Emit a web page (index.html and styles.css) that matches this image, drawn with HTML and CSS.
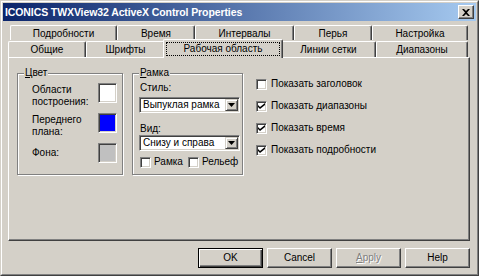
FILE: index.html
```html
<!DOCTYPE html>
<html lang="ru">
<head>
    <meta charset="UTF-8">
    <title>ICONICS TWXView32 ActiveX Control Properties</title>
    <link rel="stylesheet" href="styles.css">
</head>
<body>
    <div class="window">
        <div class="window-inner">
            <div class="titlebar">
                <span class="title">ICONICS TWXView32 ActiveX Control Properties</span>
                <span class="close-btn">
                    <svg width="8" height="7" viewBox="0 0 8 7"><path d="M0 0h2l2 2 2-2h2L5 3.5 8 7H6L4 5 2 7H0l3-3.5z" fill="#000"/></svg>
                </span>
            </div>

            <div class="tabs">
                <div class="tab-row back">
                    <div class="tab">Подробности</div>
                    <div class="tab">Время</div>
                    <div class="tab">Интервалы</div>
                    <div class="tab">Перья</div>
                    <div class="tab">Настройка</div>
                </div>
                <div class="tab-row front">
                    <div class="tab">Общие</div>
                    <div class="tab">Шрифты</div>
                    <div class="tab selected"><span class="focus">Рабочая область</span></div>
                    <div class="tab">Линии сетки</div>
                    <div class="tab">Диапазоны</div>
                </div>
            </div>

            <div class="panel">
                <div class="group color-group">
                    <span class="legend"><u>Ц</u>вет</span>
                    <div class="color-row">
                        <span class="color-label">Области<br>построения:</span>
                        <span class="swatch white"></span>
                    </div>
                    <div class="color-row">
                        <span class="color-label">Переднего<br>плана:</span>
                        <span class="swatch blue"></span>
                    </div>
                    <div class="color-row middle">
                        <span class="color-label">Фона:</span>
                        <span class="swatch gray"></span>
                    </div>
                </div>

                <div class="group frame-group">
                    <span class="legend"><u>Р</u>амка</span>
                    <div class="field-label">Стиль:</div>
                    <div class="combo">
                        <span class="combo-text">Выпуклая рамка</span>
                        <span class="combo-btn"><svg width="7" height="4" viewBox="0 0 7 4"><path d="M0 0h7L3.5 4z" fill="#000"/></svg></span>
                    </div>
                    <div class="field-label second">Вид:</div>
                    <div class="combo">
                        <span class="combo-text">Снизу и справа</span>
                        <span class="combo-btn"><svg width="7" height="4" viewBox="0 0 7 4"><path d="M0 0h7L3.5 4z" fill="#000"/></svg></span>
                    </div>
                    <div class="check-line">
                        <span class="check"><span class="box"></span>Рамка</span>
                        <span class="check"><span class="box"></span>Рельеф</span>
                    </div>
                </div>

                <div class="options">
                    <span class="check"><span class="box"></span>Показать заголовок</span>
                    <span class="check"><span class="box"><svg width="7" height="7" viewBox="0 0 7 7"><path d="M0 2l2 2 5-4v2L2 6 0 4z" fill="#000"/></svg></span>Показать диапазоны</span>
                    <span class="check"><span class="box"><svg width="7" height="7" viewBox="0 0 7 7"><path d="M0 2l2 2 5-4v2L2 6 0 4z" fill="#000"/></svg></span>Показать время</span>
                    <span class="check"><span class="box"><svg width="7" height="7" viewBox="0 0 7 7"><path d="M0 2l2 2 5-4v2L2 6 0 4z" fill="#000"/></svg></span>Показать подробности</span>
                </div>
            </div>

            <div class="buttons">
                <span class="btn default">OK</span>
                <span class="btn">Cancel</span>
                <span class="btn disabled"><u>A</u>pply</span>
                <span class="btn">Help</span>
            </div>
        </div>
    </div>
</body>
</html>
```

FILE: styles.css
```css
* {
    box-sizing: border-box;
}
body {
    margin: 0;
    background: #d4d0c8;
    font-family: "Liberation Sans", Arial, sans-serif;
    font-size: 10px;
    line-height: 12px;
    color: #000;
}
.window {
    width: 479px;
    height: 276px;
    border: 1px solid;
    border-color: #d4d0c8 #404040 #404040 #d4d0c8;
    background: #d4d0c8;
}
.window-inner {
    height: 100%;
    border: 1px solid;
    border-color: #fff #808080 #808080 #fff;
    padding: 1px;
    display: flex;
    flex-direction: column;
}

/* Title bar */
.titlebar {
    height: 18px;
    flex: none;
    background: linear-gradient(to right, #0a246a, #a6caf0);
    display: flex;
    align-items: center;
    justify-content: space-between;
    padding: 0 2px 0 2px;
}
.title {
    color: #fff;
    font-weight: bold;
    font-size: 10.5px;
    letter-spacing: -0.1px;
}
.close-btn {
    width: 16px;
    height: 14px;
    background: #d4d0c8;
    border: 1px solid;
    border-color: #fff #404040 #404040 #fff;
    box-shadow: inset -1px -1px 0 #808080;
    display: flex;
    align-items: center;
    justify-content: center;
}

/* Tabs */
.tabs {
    margin: 4px 0 0 5px;
    flex: none;
}
.tab-row {
    display: flex;
}
.tab-row.back {
    margin-left: 2px;
    height: 15px;
}
.tab-row.front {
    height: 17px;
}
.tab {
    flex: none;
    height: 100%;
    background: #d4d0c8;
    border-top: 1px solid #fff;
    border-left: 1px solid #fff;
    border-right: 1px solid #404040;
    box-shadow: inset -1px 0 0 #808080;
    border-radius: 2px 2px 0 0;
    text-align: center;
    padding-top: 2px;
    white-space: nowrap;
}
.back .tab:nth-child(1) { width: 107px; }
.back .tab:nth-child(2) { width: 78px; }
.back .tab:nth-child(3) { width: 99px; }
.back .tab:nth-child(4) { width: 78px; }
.back .tab:nth-child(5) { width: 96px; }
.front .tab {
    margin-top: 1px;
    height: 16px;
}
.front .tab:nth-child(1) { width: 78px; }
.front .tab:nth-child(2) { width: 79px; }
.front .tab:nth-child(3) { width: 116px; }
.front .tab:nth-child(4) { width: 95px; }
.front .tab:nth-child(5) { width: 92px; }
.front .tab.selected {
    width: 120px;
    height: 19px;
    margin: -1px -2px -1px;
    padding-top: 0;
    position: relative;
    z-index: 1;
}
.focus {
    display: block;
    margin: 2px 2px 0;
    height: 14px;
    line-height: 12px;
    border: 1px dotted #000;
}

/* Page panel */
.panel {
    flex: none;
    margin: 0 6px 0 5px;
    height: 184px;
    border: 1px solid;
    border-color: #fff #404040 #404040 #fff;
    box-shadow: inset -1px -1px 0 #808080;
    display: flex;
    align-items: flex-start;
    padding: 15px 0 0 8px;
}
.group {
    position: relative;
    height: 102px;
    border: 1px solid #808080;
    box-shadow: inset 1px 1px 0 #fff, 1px 1px 0 #fff;
}
.legend {
    position: absolute;
    top: -7px;
    left: 6px;
    padding: 0 1px;
    background: #d4d0c8;
    line-height: 12px;
}
.color-group {
    width: 106px;
    padding: 9px 0 0 14px;
}
.color-row {
    display: flex;
    align-items: flex-start;
    height: 30px;
}
.color-row.middle {
    align-items: center;
    height: 20px;
}
.color-label {
    width: 66px;
    padding-top: 1px;
}
.middle .color-label {
    padding-top: 0;
}
.swatch {
    width: 19px;
    height: 20px;
    border: 1px solid;
    border-color: #808080 #fff #fff #808080;
    box-shadow: inset 1px 1px 0 #404040, inset -1px -1px 0 #d4d0c8;
}
.swatch.white { background: #fff; }
.swatch.blue { background: #0000ff; }
.swatch.gray { background: #c0c0c0; }

.frame-group {
    width: 111px;
    margin-left: 9px;
    padding: 8px 0 0 6px;
}
.field-label {
    padding-left: 1px;
}
.field-label.second {
    margin-top: 10px;
}
.combo {
    width: 101px;
    height: 16px;
    margin-top: 3px;
    background: #fff;
    border: 1px solid;
    border-color: #808080 #fff #fff #808080;
    box-shadow: inset 1px 1px 0 #404040, inset -1px -1px 0 #d4d0c8;
    display: flex;
    align-items: center;
    justify-content: space-between;
    padding: 1px 1px 1px 3px;
}
.field-label + .combo + .field-label + .combo {
    margin-top: 0;
}
.combo-btn {
    width: 13px;
    height: 12px;
    background: #d4d0c8;
    border: 1px solid;
    border-color: #d4d0c8 #404040 #404040 #d4d0c8;
    box-shadow: inset 1px 1px 0 #fff, inset -1px -1px 0 #808080;
    display: flex;
    align-items: center;
    justify-content: center;
}
.check-line {
    display: flex;
    gap: 5px;
    margin-top: 5px;
    padding-left: 1px;
}
.check-line .check {
    gap: 3px;
}
.check {
    display: flex;
    align-items: center;
    gap: 4px;
    white-space: nowrap;
}
.box {
    width: 11px;
    height: 11px;
    flex: none;
    background: #fff;
    border: 1px solid;
    border-color: #808080 #fff #fff #808080;
    box-shadow: inset 1px 1px 0 #404040, inset -1px -1px 0 #d4d0c8;
    display: flex;
    align-items: center;
    justify-content: center;
}
.options {
    margin-left: 13px;
    display: flex;
    flex-direction: column;
}
.options .check {
    height: 22px;
}

/* Dialog buttons */
.buttons {
    flex: none;
    display: flex;
    justify-content: flex-end;
    gap: 4px;
    margin: 7px 6px 0 0;
}
.btn {
    width: 65px;
    height: 20px;
    background: #d4d0c8;
    border: 1px solid;
    border-color: #fff #404040 #404040 #fff;
    box-shadow: inset -1px -1px 0 #808080;
    display: flex;
    align-items: center;
    justify-content: center;
}
.btn.default {
    border-color: #000;
    box-shadow: inset 1px 1px 0 #fff, inset -1px -1px 0 #404040, inset -2px -2px 0 #808080;
}
.btn.disabled {
    color: #808080;
    text-shadow: 1px 1px 0 #fff;
}
```
